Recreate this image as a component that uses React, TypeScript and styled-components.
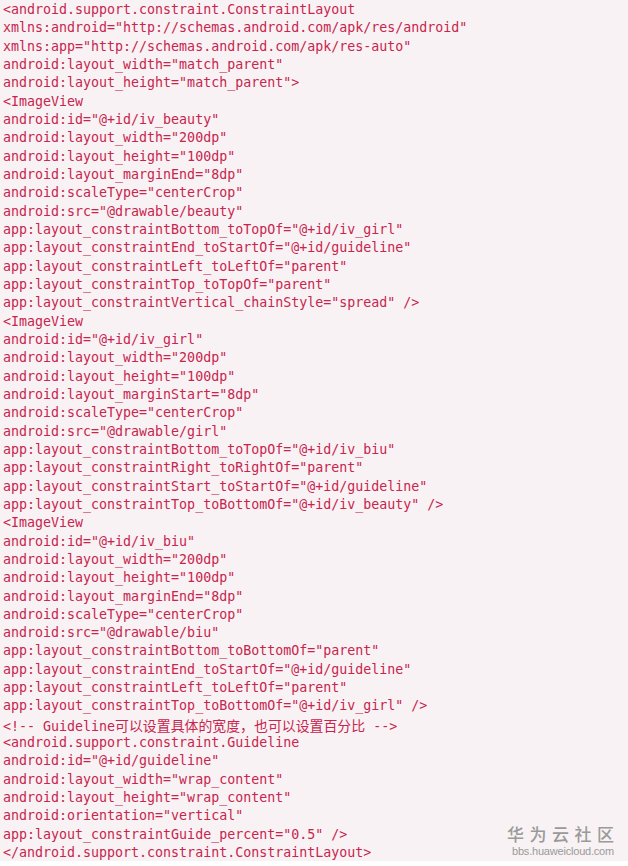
import React from "react";
import styled, { createGlobalStyle } from "styled-components";

const Global = createGlobalStyle`
  html, body { margin: 0; padding: 0; background: #ffffff; }
`;

const Frame = styled.div`
  position: relative;
  width: 628px;
  height: 861px;
  background: #f8f2f4;
  overflow: hidden;
`;

const Code = styled.pre`
  margin: 0;
  padding: 1px 0 0 3px;
  font-family: "DejaVu Sans Mono", monospace;
  font-size: 13.3px;
  line-height: 18.33px;
  color: #c7254e;
  white-space: pre;
`;

const Line = styled.div`
  height: 18.33px;
`;

const Cjk = styled.span`
  font-family: "Noto Sans CJK SC", sans-serif;
  font-size: 13.9px;
`;

const Watermark = styled.div`
  position: absolute;
  right: 14px;
  bottom: 3px;
  display: flex;
  flex-direction: column;
  align-items: flex-end;
  color: #9a9a9a;
`;

const MarkTitle = styled.div`
  font-family: "Noto Sans CJK SC", sans-serif;
  font-size: 17px;
  letter-spacing: 5.5px;
  margin-right: -5.5px;
  line-height: 20px;
  font-weight: 500;
`;

const MarkUrl = styled.div`
  font-family: "Liberation Sans", sans-serif;
  font-size: 11px;
  line-height: 14px;
  letter-spacing: -0.2px;
`;

const lines = [
  "<android.support.constraint.ConstraintLayout",
  'xmlns:android="http://schemas.android.com/apk/res/android"',
  'xmlns:app="http://schemas.android.com/apk/res-auto"',
  'android:layout_width="match_parent"',
  'android:layout_height="match_parent">',
  "<ImageView",
  'android:id="@+id/iv_beauty"',
  'android:layout_width="200dp"',
  'android:layout_height="100dp"',
  'android:layout_marginEnd="8dp"',
  'android:scaleType="centerCrop"',
  'android:src="@drawable/beauty"',
  'app:layout_constraintBottom_toTopOf="@+id/iv_girl"',
  'app:layout_constraintEnd_toStartOf="@+id/guideline"',
  'app:layout_constraintLeft_toLeftOf="parent"',
  'app:layout_constraintTop_toTopOf="parent"',
  'app:layout_constraintVertical_chainStyle="spread" />',
  "<ImageView",
  'android:id="@+id/iv_girl"',
  'android:layout_width="200dp"',
  'android:layout_height="100dp"',
  'android:layout_marginStart="8dp"',
  'android:scaleType="centerCrop"',
  'android:src="@drawable/girl"',
  'app:layout_constraintBottom_toTopOf="@+id/iv_biu"',
  'app:layout_constraintRight_toRightOf="parent"',
  'app:layout_constraintStart_toStartOf="@+id/guideline"',
  'app:layout_constraintTop_toBottomOf="@+id/iv_beauty" />',
  "<ImageView",
  'android:id="@+id/iv_biu"',
  'android:layout_width="200dp"',
  'android:layout_height="100dp"',
  'android:layout_marginEnd="8dp"',
  'android:scaleType="centerCrop"',
  'android:src="@drawable/biu"',
  'app:layout_constraintBottom_toBottomOf="parent"',
  'app:layout_constraintEnd_toStartOf="@+id/guideline"',
  'app:layout_constraintLeft_toLeftOf="parent"',
  'app:layout_constraintTop_toBottomOf="@+id/iv_girl" />',
  "COMMENT",
  "<android.support.constraint.Guideline",
  'android:id="@+id/guideline"',
  'android:layout_width="wrap_content"',
  'android:layout_height="wrap_content"',
  'android:orientation="vertical"',
  'app:layout_constraintGuide_percent="0.5" />',
  "</android.support.constraint.ConstraintLayout>",
];

export default function App() {
  return (
    <>
      <Global />
      <Frame>
        <Code>
          {lines.map((l, i) =>
            l === "COMMENT" ? (
              <Line key={i}>
                {"<!-- Guideline"}
                <Cjk>可以设置具体的宽度，也可以设置百分比</Cjk>
                {" -->"}
              </Line>
            ) : (
              <Line key={i}>{l}</Line>
            )
          )}
        </Code>
        <Watermark>
          <MarkTitle>华为云社区</MarkTitle>
          <MarkUrl>bbs.huaweicloud.com</MarkUrl>
        </Watermark>
      </Frame>
    </>
  );
}
